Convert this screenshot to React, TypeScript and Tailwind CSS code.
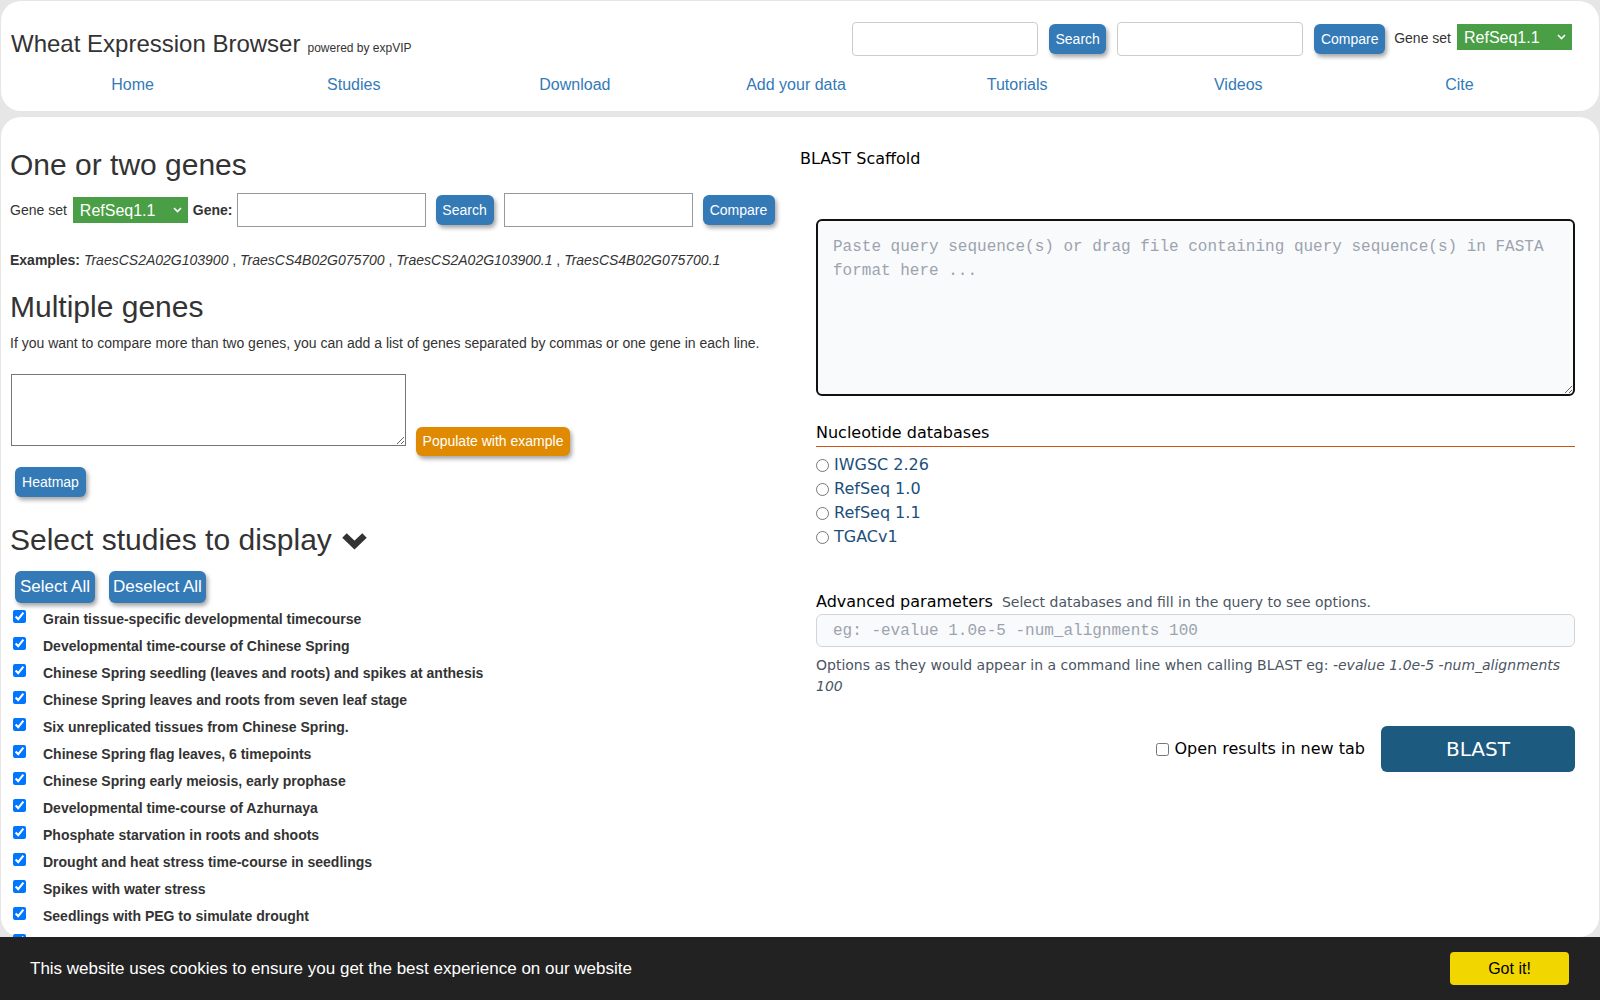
import React from 'react';

const navLinks = ['Home', 'Studies', 'Download', 'Add your data', 'Tutorials', 'Videos', 'Cite'];

const studies = [
  'Grain tissue-specific developmental timecourse',
  'Developmental time-course of Chinese Spring',
  'Chinese Spring seedling (leaves and roots) and spikes at anthesis',
  'Chinese Spring leaves and roots from seven leaf stage',
  'Six unreplicated tissues from Chinese Spring.',
  'Chinese Spring flag leaves, 6 timepoints',
  'Chinese Spring early meiosis, early prophase',
  'Developmental time-course of Azhurnaya',
  'Phosphate starvation in roots and shoots',
  'Drought and heat stress time-course in seedlings',
  'Spikes with water stress',
  'Seedlings with PEG to simulate drought',
  'Spikes with Fusarium graminearum',
  'Seedlings with Septoria tritici',
];

const databases = ['IWGSC 2.26', 'RefSeq 1.0', 'RefSeq 1.1', 'TGACv1'];

// small blue bootstrap-ish button
const Btn: React.FC<{ label: string; className?: string }> = ({ label, className = '' }) => (
  <button
    className={`h-[30px] rounded-[6px] bg-[#337ab7] text-[14px] text-white shadow-[2px_3px_4px_rgba(0,0,0,0.35)] ${className}`}
  >
    {label}
  </button>
);

const GeneSetSelect: React.FC<{ className?: string }> = ({ className = '' }) => (
  <div className={`flex h-[26px] w-[115px] items-center justify-between bg-[#4a9e45] pl-[7px] pr-[6px] text-[16px] text-white ${className}`}>
    <span className="mt-[1px]">RefSeq1.1</span>
    <svg width="9" height="6" viewBox="0 0 9 6" fill="none">
      <path d="M1 1l3.5 3.5L8 1" stroke="white" strokeWidth="1.6" />
    </svg>
  </div>
);

export default function App() {
  return (
    <div className="min-h-[1000px] bg-[#e6e6e6] pt-[1px] font-['Liberation_Sans',Arial,sans-serif] text-[#333]">
      {/* Header */}
      <header className="mx-[1px] h-[110px] rounded-[20px] bg-white pl-[10px] pr-[27px] pt-[21px]">
        <div className="flex items-start justify-between">
          <div className="mt-[9px] flex items-baseline gap-[7px]">
            <span className="text-[24px] leading-[26px]">Wheat Expression Browser</span>
            <span className="text-[12px]">powered by expVIP</span>
          </div>
          <div className="flex items-start">
            <input className="h-[34px] w-[186px] rounded-[4px] border border-[#ccc]" />
            <Btn label="Search" className="ml-[11px] mt-[2px] w-[57px]" />
            <input className="ml-[11px] h-[34px] w-[186px] rounded-[4px] border border-[#ccc]" />
            <Btn label="Compare" className="ml-[11px] mt-[2px] w-[71px]" />
            <span className="ml-[9px] mt-[6px] text-[14px] leading-[20px]">Gene set</span>
            <GeneSetSelect className="ml-[6px] mt-[2px] w-[113px]" />
          </div>
        </div>
        <nav className="ml-[11px] mr-[2px] mt-[17px] grid grid-cols-7">
          {navLinks.map((l) => (
            <a key={l} className="text-center text-[16px] leading-[22px] text-[#337ab7]">
              {l}
            </a>
          ))}
        </nav>
      </header>

      {/* Main */}
      <main className="mx-[1px] mt-[6px] grid h-[820px] grid-cols-[799px_1fr] rounded-[20px] bg-white pt-[31px]">
        {/* Left column */}
        <section className="pl-[9px]">
          <h2 className="text-[30px] leading-[33px]">One or two genes</h2>
          <div className="mt-[12px] flex h-[34px] items-center text-[14px]">
            <span>Gene set</span>
            <GeneSetSelect className="ml-[6px]" />
            <b className="ml-[5px]">Gene:</b>
            <input className="ml-[4px] h-[34px] w-[189px] border border-[#999]" />
            <Btn label="Search" className="ml-[10px] w-[58px]" />
            <input className="ml-[10px] h-[34px] w-[189px] border border-[#999]" />
            <Btn label="Compare" className="ml-[10px] w-[72px]" />
          </div>
          <p className="mt-[23px] text-[14px] leading-[20px]">
            <b>Examples:</b> <i>TraesCS2A02G103900</i> , <i>TraesCS4B02G075700</i> , <i>TraesCS2A02G103900.1</i> ,{' '}
            <i>TraesCS4B02G075700.1</i>
          </p>

          <h2 className="mt-[20px] text-[30px] leading-[33px]">Multiple genes</h2>
          <p className="mt-[10px] text-[14px] leading-[20px]">
            If you want to compare more than two genes, you can add a list of genes separated by commas or one gene in each line.
          </p>
          <div className="mt-[21px] flex items-start">
            <textarea className="ml-[1px] h-[72px] w-[395px] border border-[#767676]" />
            <button className="ml-[10px] mt-[53px] h-[29px] w-[154px] rounded-[6px] bg-[#df8a00] text-[14px] text-white shadow-[2px_3px_4px_rgba(0,0,0,0.35)]">
              Populate with example
            </button>
          </div>
          <Btn label="Heatmap" className="ml-[5px] mt-[11px] w-[71px]" />

          <h2 className="mt-[26px] flex items-center text-[30px] leading-[33px]">
            Select studies to display
            <svg className="ml-[9px] mt-[2px]" width="27" height="20" viewBox="0 0 27 20" fill="none">
              <path d="M3.5 4.5l10 9.5 10-9.5" stroke="#333" strokeWidth="6.5" strokeLinejoin="miter" />
            </svg>
          </h2>
          <div className="ml-[5px] mt-[15px] flex gap-[14px]">
            <button className="h-[32px] w-[80px] rounded-[6px] bg-[#337ab7] text-[17px] text-white shadow-[2px_3px_4px_rgba(0,0,0,0.35)]">
              Select All
            </button>
            <button className="h-[32px] w-[97px] rounded-[6px] bg-[#337ab7] text-[17px] text-white shadow-[2px_3px_4px_rgba(0,0,0,0.35)]">
              Deselect All
            </button>
          </div>
          <ul className="mt-[2px]">
            {studies.map((s) => (
              <li key={s} className="flex h-[27px] items-start">
                <input type="checkbox" defaultChecked className="ml-[3px] mt-[5px] h-[13px] w-[13px]" />
                <span className="ml-[17px] mt-[4px] text-[14px] font-bold leading-[20px]">{s}</span>
              </li>
            ))}
          </ul>
        </section>

        {/* Right column: BLAST */}
        <section className="-mt-[1px] pr-[24px] font-['DejaVu_Sans',sans-serif] text-[16px] text-black">
          <h3 className="text-[16px] leading-[24px]">BLAST Scaffold</h3>
          <div className="pl-[16px]">
            <textarea
              className="mt-[48px] h-[177px] w-full resize-y rounded-[6px] border-2 border-[#111] bg-[#f9fafb] px-[15px] py-[14px] font-['Liberation_Mono',monospace] text-[16px] leading-[24px] placeholder:text-[#9ca3af]"
              placeholder="Paste query sequence(s) or drag file containing query sequence(s) in FASTA format here ..."
            />
            <div className="mt-[18px] pb-[1px] leading-[24px]">Nucleotide databases</div>
            <div className="h-[1px] bg-[#cc5418]" />
            <div className="mt-[6px]">
              {databases.map((d) => (
                <label key={d} className="flex h-[24px] items-center">
                  <input type="radio" name="db" className="h-[13px] w-[13px]" />
                  <span className="ml-[5px] text-[#1c4f7c]">{d}</span>
                </label>
              ))}
            </div>
            <div className="mt-[41px] flex items-baseline leading-[24px]">
              <span>Advanced parameters</span>
              <span className="ml-[9px] text-[14px] text-[#4b5563]">Select databases and fill in the query to see options.</span>
            </div>
            <input
              className="h-[33px] w-full rounded-[6px] border border-[#d1d5db] bg-[#f9fafb] px-[16px] font-['Liberation_Mono',monospace] text-[16px] placeholder:text-[#9ca3af]"
              placeholder="eg: -evalue 1.0e-5 -num_alignments 100"
            />
            <p className="mt-[8px] text-[14px] leading-[21px] text-[#4b5563]">
              Options as they would appear in a command line when calling BLAST eg: <i>-evalue 1.0e-5 -num_alignments 100</i>
            </p>
            <div className="mt-[29px] flex items-center justify-end">
              <label className="flex items-center">
                <input type="checkbox" className="h-[13px] w-[13px]" />
                <span className="ml-[5px]">Open results in new tab</span>
              </label>
              <button className="ml-[16px] h-[46px] w-[194px] rounded-[6px] bg-[#1d5a80] text-[20px] text-white">BLAST</button>
            </div>
          </div>
        </section>
      </main>

      {/* Cookie bar */}
      <div className="fixed bottom-0 left-0 right-0 flex h-[63px] items-center justify-between bg-[#222] pl-[30px] pr-[31px]">
        <span className="text-[17px] text-white">This website uses cookies to ensure you get the best experience on our website</span>
        <button className="h-[33px] w-[119px] rounded-[4px] bg-[#f1d600] text-[16px] text-black">Got it!</button>
      </div>
    </div>
  );
}
